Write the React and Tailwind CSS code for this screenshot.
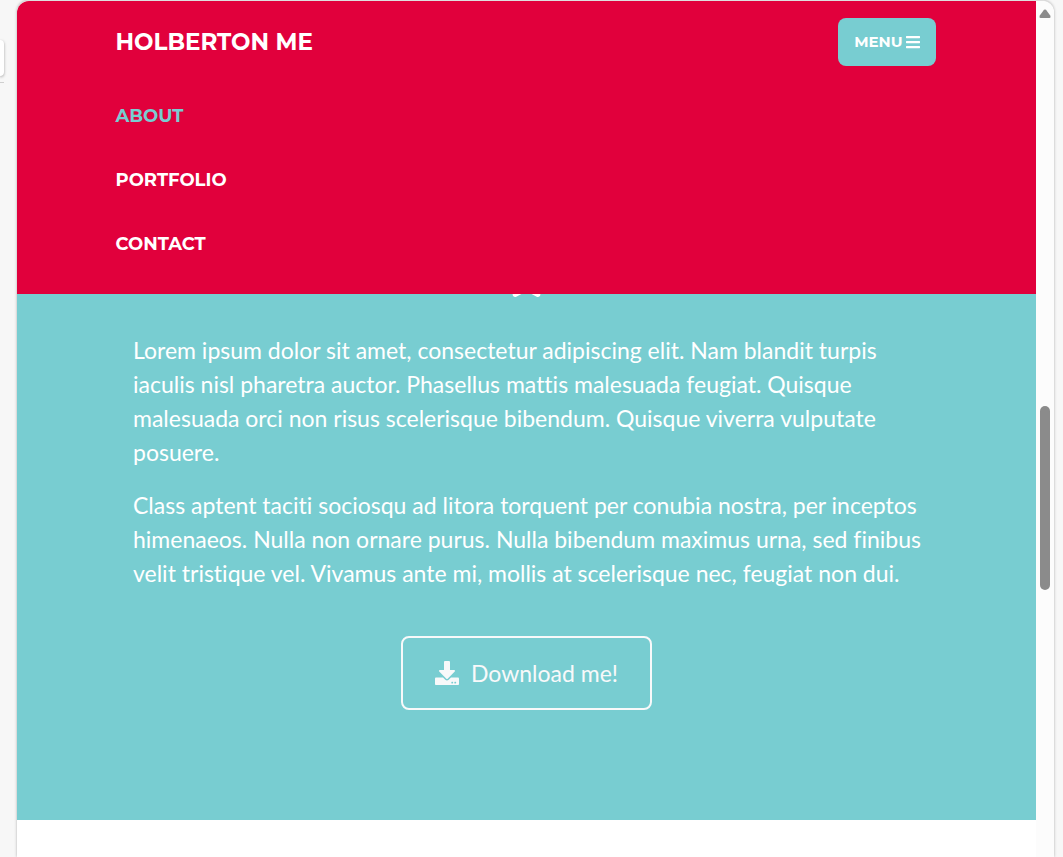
import { FaBars, FaDownload, FaStar } from "react-icons/fa";

const links = [
  { label: "About", href: "#about", active: true },
  { label: "Portfolio", href: "#portfolio", active: false },
  { label: "Contact", href: "#contact", active: false },
];

function Navbar() {
  return (
    <nav className="rounded-tl-xl bg-[#e1003c] pr-0.5 pt-[17px] pb-[18px]">
      <div className="mx-auto w-full max-w-[820px] font-['Montserrat','Inter',sans-serif] font-bold uppercase text-white">
        <div className="flex h-12 items-center justify-between">
          <a href="#top" className="text-[23px] leading-8">Holberton Me</a>
          <button type="button" className="flex h-12 items-center gap-[3px] rounded-lg bg-[#78cdd1] px-4 text-[15px] font-bold uppercase">
            Menu
            <FaBars aria-hidden="true" className="h-4 w-3.5" />
          </button>
        </div>
        <ul className="pt-[18px]">
          {links.map((link) => (
            <li key={link.label} className="flex h-16 items-center">
              <a href={link.href} className={link.active ? "text-lg text-[#78cdd1]" : "text-lg"}>
                {link.label}
              </a>
            </li>
          ))}
        </ul>
      </div>
    </nav>
  );
}

function About() {
  return (
    <section id="about" className="bg-[#78cdd1] pb-[110px] font-['Lato',sans-serif] text-white">
      <div className="flex h-[3px] items-end justify-center overflow-hidden">
        <FaStar aria-hidden="true" className="h-10 w-[45px] shrink-0" />
      </div>
      <div className="mx-auto max-w-[821px] px-[17px] pt-9">
        <div className="-mr-2 space-y-[19px] text-[23px] leading-[34px] [font-variant-ligatures:no-common-ligatures]">
          <p>
            Lorem ipsum dolor sit amet, consectetur adipiscing elit. Nam blandit turpis iaculis nisl pharetra auctor. Phasellus mattis malesuada feugiat. Quisque malesuada orci non risus scelerisque bibendum. Quisque viverra vulputate posuere.
          </p>
          <p>
            Class aptent taciti sociosqu ad litora torquent per conubia nostra, per inceptos himenaeos. Nulla non ornare purus. Nulla bibendum maximus urna, sed finibus velit tristique vel. Vivamus ante mi, mollis at scelerisque nec, feugiat non dui.
          </p>
        </div>
        <div className="flex justify-center pt-[46px]">
          <a href="#download" className="flex h-[74px] items-center gap-3 rounded-lg border-2 border-[#f8f9fa] px-8 text-[23px] leading-[34px] text-[#f8f9fa]">
            <FaDownload aria-hidden="true" className="size-6" />
            Download me!
          </a>
        </div>
      </div>
    </section>
  );
}

function ScrollTrack() {
  return (
    <div aria-hidden="true" className="flex w-[18px] shrink-0 flex-col items-center rounded-tr-xl bg-[#fcfcfc] pt-2">
      <svg viewBox="0 0 12 9" className="h-[9px] w-3 fill-[#8b8b8b]">
        <path d="M5 .8Q6 0 7 .8L11.4 6.8Q12 9 10.5 9H1.5Q0 9 .6 6.8Z" />
      </svg>
      <div className="mt-[388px] h-[184px] w-[10px] rounded-full bg-[#8b8b8b]" />
    </div>
  );
}

export default function App() {
  return (
    <div className="flex min-h-screen bg-[#f7f7f7]">
      <div aria-hidden="true" className="w-[17px] shrink-0 overflow-hidden pt-10">
        <div className="h-9 w-1 rounded-r-md bg-white shadow-[0_1px_3px_rgba(0,0,0,0.35)]" />
        <div className="mt-[6px] h-px w-1 bg-[#cfcfcf]" />
      </div>
      <div className="flex min-w-0 flex-1 rounded-t-xl border-t border-[#dedede] bg-white shadow-[0_0_3px_rgba(0,0,0,0.3)]">
        <main className="min-w-0 flex-1">
          <Navbar />
          <About />
        </main>
        <ScrollTrack />
      </div>
      <div aria-hidden="true" className="w-[9px] shrink-0" />
    </div>
  );
}
